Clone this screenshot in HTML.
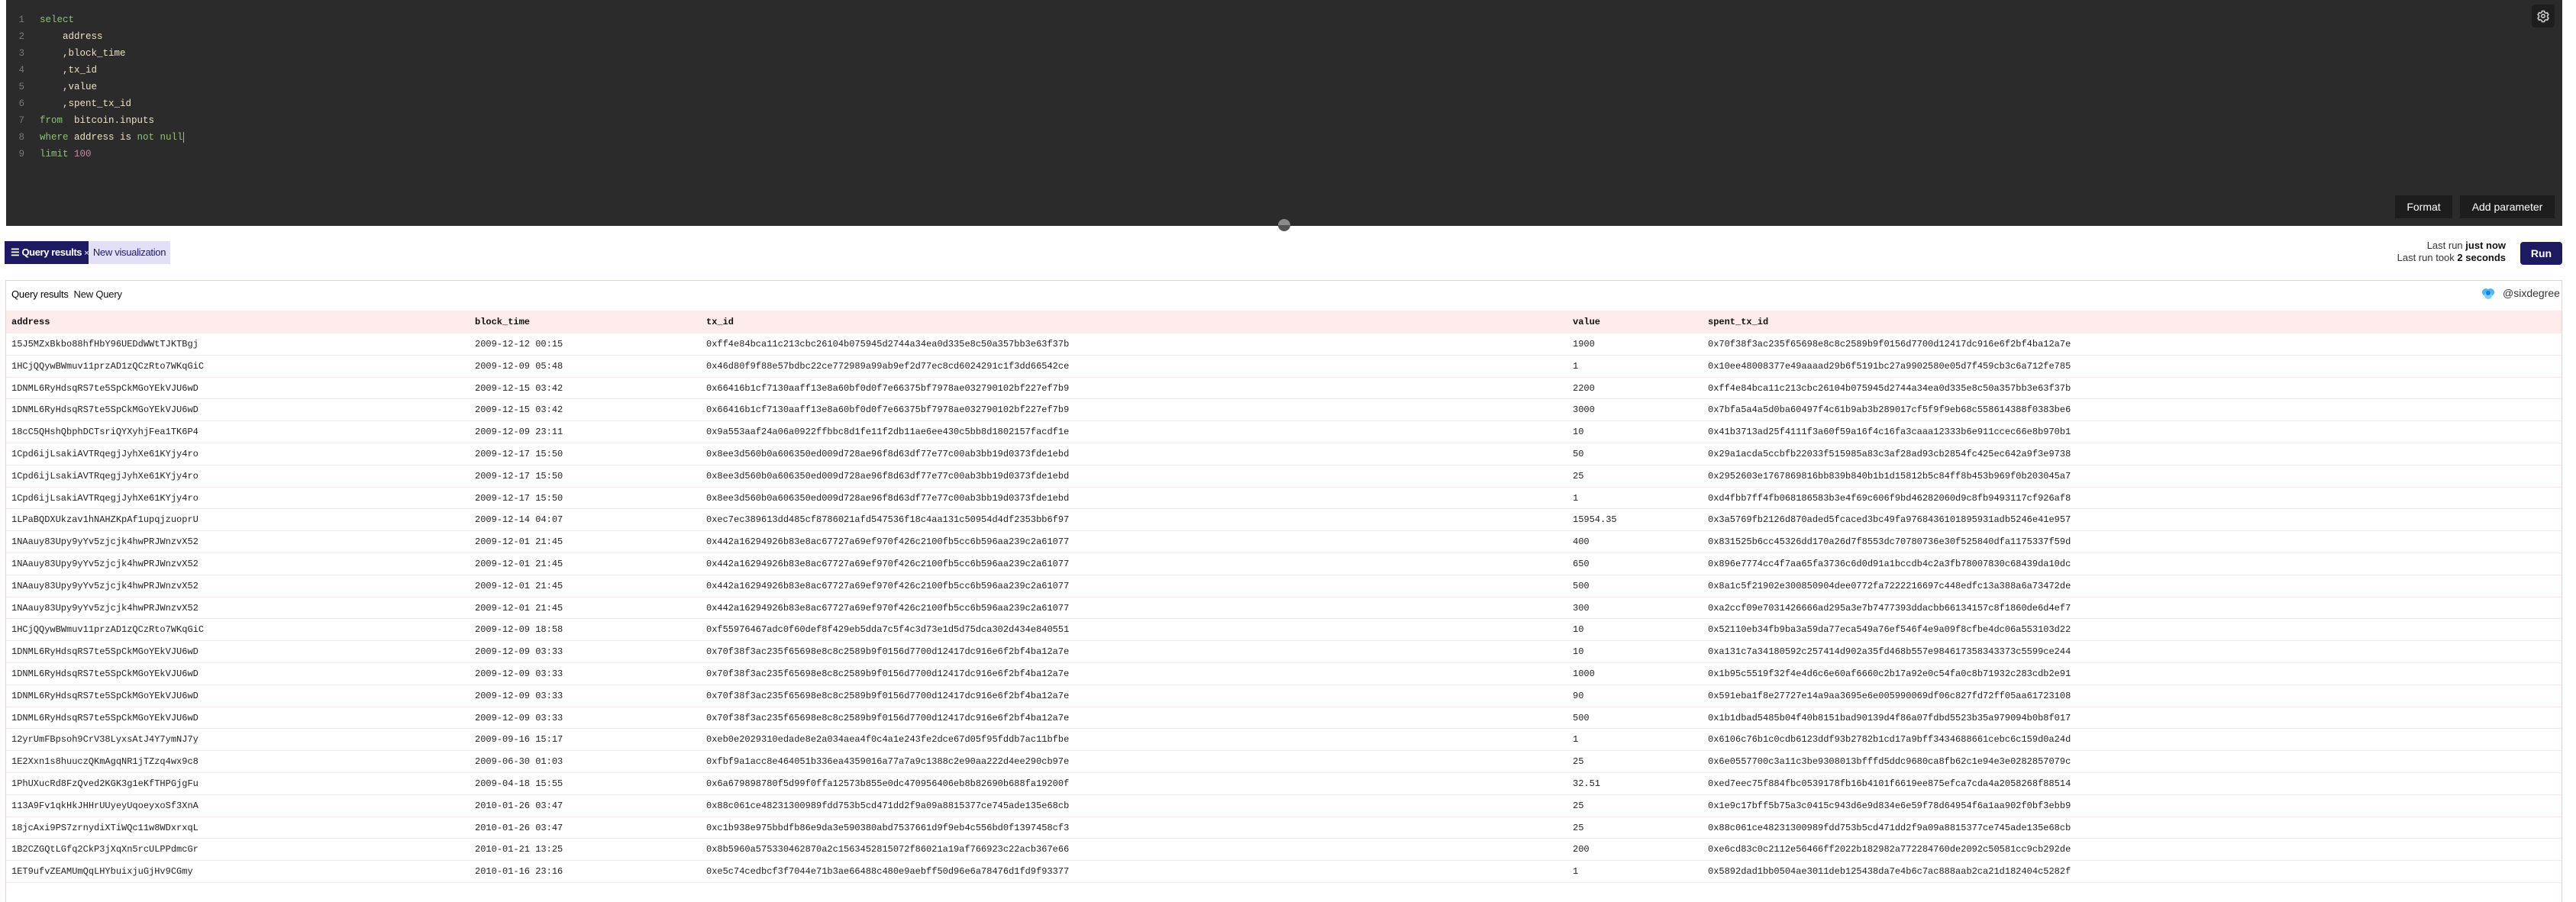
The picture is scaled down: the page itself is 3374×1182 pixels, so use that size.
<!DOCTYPE html>
<html><head><meta charset="utf-8"><style>
*{margin:0;padding:0;box-sizing:border-box}
body{width:3374px;height:1182px;background:#fff;position:relative;overflow:hidden;font-family:"Liberation Sans",sans-serif}
#ed{position:absolute;left:8px;top:0;width:3348px;height:296px;background:#2b2b2b}
.ln{position:absolute;left:14px;width:10px;text-align:right;color:#7a7a7a;font:12.5px "Liberation Mono",monospace}
.cl{position:absolute;left:44px;color:#ede0c4;font:12.5px "Liberation Mono",monospace;white-space:pre}
.k{color:#8fc07a}.n{color:#c98aa9}
.gear{position:absolute;left:3316px;top:6px;width:30px;height:30px;background:#1e1e1e;border-radius:4px}
.btn{position:absolute;top:256px;height:30px;background:#1d1d1d;color:#fff;font:14px "Liberation Sans",sans-serif;line-height:30px;text-align:center}
.handle{position:absolute;left:1674px;top:287px;width:16px;height:16px;border-radius:50%;background:linear-gradient(#8a8a8a 50%,#555 50%)}
.tab1{position:absolute;left:6px;top:316px;width:110px;height:30px;background:#1e1a62;color:#fff;font-size:13px;line-height:30px;padding-left:8px;font-weight:bold;white-space:nowrap;letter-spacing:-0.4px;overflow:hidden}
.tab2{position:absolute;left:116px;top:316px;width:107px;height:30px;background:#e1e0f6;color:#1e1a62;font-size:13px;line-height:30px;text-align:center;white-space:nowrap;letter-spacing:-0.3px}
.lr{position:absolute;right:92px;font:13px "Liberation Sans",sans-serif;color:#333;text-align:right;white-space:nowrap}
.run{position:absolute;left:3301px;top:317px;width:55px;height:30px;background:#1e1a62;color:#fff;border-radius:4px;font:bold 14px "Liberation Sans",sans-serif;line-height:30px;text-align:center}
#panel{position:absolute;left:7px;top:367px;width:3349px;height:815px;border:1px solid #f6c8c8;border-bottom:none}
.ph{position:absolute;left:15px;top:378px;font-size:13px;color:#111;white-space:nowrap;letter-spacing:-0.2px}
.sx{position:absolute;left:3278px;top:376px;font:14px "Liberation Sans",sans-serif;color:#333;white-space:nowrap}
.hr{position:absolute;left:8px;top:407px;width:3347px;height:30px;background:#fdeaea}
.row{position:absolute;left:8px;width:3347px;height:28.8px;border-bottom:1px solid #fbe6e8}
.c{position:absolute;font:12px "Liberation Mono",monospace;color:#222;white-space:pre;top:7px}
.hr .c{font-weight:bold;top:8px;color:#111}
.c1{left:7px}.c2{left:614px}.c3{left:917px}.c4{left:2052px}.c5{left:2229px}
</style></head><body>
<div id="ed">
<div class="ln" style="top:19px">1</div><div class="cl k" style="top:19px">select</div>
<div class="ln" style="top:41px">2</div><div class="cl" style="top:41px">    address</div>
<div class="ln" style="top:63px">3</div><div class="cl" style="top:63px">    ,block_time</div>
<div class="ln" style="top:85px">4</div><div class="cl" style="top:85px">    ,tx_id</div>
<div class="ln" style="top:107px">5</div><div class="cl" style="top:107px">    ,value</div>
<div class="ln" style="top:129px">6</div><div class="cl" style="top:129px">    ,spent_tx_id</div>
<div class="ln" style="top:151px">7</div><div class="cl" style="top:151px"><span class="k">from</span>  bitcoin.inputs</div>
<div class="ln" style="top:173px">8</div><div class="cl" style="top:173px"><span class="k">where</span> address is <span class="k">not null</span><span style="border-left:1px solid #aaa"></span></div>
<div class="ln" style="top:195px">9</div><div class="cl" style="top:195px"><span class="k">limit</span> <span class="n">100</span></div>
</div>
<div class="gear"><svg width="30" height="30" viewBox="0 0 30 30"><g fill="none" stroke="#ccc" stroke-width="1.6"><circle cx="15" cy="15" r="2.2"/><path d="M13.5 8.5h3l.5 1.8 1.6.9 1.8-.5 1.5 2.6-1.3 1.3v1.8l1.3 1.3-1.5 2.6-1.8-.5-1.6.9-.5 1.8h-3l-.5-1.8-1.6-.9-1.8.5-1.5-2.6 1.3-1.3v-1.8l-1.3-1.3 1.5-2.6 1.8.5 1.6-.9z"/></g></svg></div>
<div class="btn" style="left:3137px;width:75px">Format</div>
<div class="btn" style="left:3222px;width:124px">Add parameter</div>
<div class="handle"></div>
<div class="tab1">☰ Query results <span style="font-weight:normal;font-size:11px">×</span></div>
<div class="tab2">New visualization</div>
<div class="lr" style="top:314px">Last run <b style="color:#111">just now</b></div>
<div class="lr" style="top:330px">Last run took <b style="color:#111">2 seconds</b></div>
<div class="run">Run</div>
<div id="panel"></div>
<div class="ph"><b style="font-weight:normal;color:#000">Query results</b> &nbsp;New Query</div>
<svg style="position:absolute;left:3250px;top:377px" width="18" height="16" viewBox="0 0 18 16"><circle cx="6" cy="6" r="5" fill="#4fb4f0"/><circle cx="12" cy="6" r="5" fill="#4fb4f0"/><circle cx="9" cy="10" r="5" fill="#7cd0fa"/><circle cx="9" cy="7" r="3" fill="#1e7fd8"/></svg>
<div class="sx">@sixdegree</div>
<div class="hr"><div class="c c1">address</div><div class="c c2">block_time</div><div class="c c3">tx_id</div><div class="c c4">value</div><div class="c c5">spent_tx_id</div></div>
<div id="rows"></div>
<script>
var d=[
["15J5MZxBkbo88hfHbY96UEDdWWtTJKTBgj","2009-12-12 00:15","0xff4e84bca11c213cbc26104b075945d2744a34ea0d335e8c50a357bb3e63f37b","1900","0x70f38f3ac235f65698e8c8c2589b9f0156d7700d12417dc916e6f2bf4ba12a7e"],
["1HCjQQywBWmuv11przAD1zQCzRto7WKqGiC","2009-12-09 05:48","0x46d80f9f88e57bdbc22ce772989a99ab9ef2d77ec8cd6024291c1f3dd66542ce","1","0x10ee48008377e49aaaad29b6f5191bc27a9902580e05d7f459cb3c6a712fe785"],
["1DNML6RyHdsqRS7te5SpCkMGoYEkVJU6wD","2009-12-15 03:42","0x66416b1cf7130aaff13e8a60bf0d0f7e66375bf7978ae032790102bf227ef7b9","2200","0xff4e84bca11c213cbc26104b075945d2744a34ea0d335e8c50a357bb3e63f37b"],
["1DNML6RyHdsqRS7te5SpCkMGoYEkVJU6wD","2009-12-15 03:42","0x66416b1cf7130aaff13e8a60bf0d0f7e66375bf7978ae032790102bf227ef7b9","3000","0x7bfa5a4a5d0ba60497f4c61b9ab3b289017cf5f9f9eb68c558614388f0383be6"],
["18cC5QHshQbphDCTsriQYXyhjFea1TK6P4","2009-12-09 23:11","0x9a553aaf24a06a0922ffbbc8d1fe11f2db11ae6ee430c5bb8d1802157facdf1e","10","0x41b3713ad25f4111f3a60f59a16f4c16fa3caaa12333b6e911ccec66e8b970b1"],
["1Cpd6ijLsakiAVTRqegjJyhXe61KYjy4ro","2009-12-17 15:50","0x8ee3d560b0a606350ed009d728ae96f8d63df77e77c00ab3bb19d0373fde1ebd","50","0x29a1acda5ccbfb22033f515985a83c3af28ad93cb2854fc425ec642a9f3e9738"],
["1Cpd6ijLsakiAVTRqegjJyhXe61KYjy4ro","2009-12-17 15:50","0x8ee3d560b0a606350ed009d728ae96f8d63df77e77c00ab3bb19d0373fde1ebd","25","0x2952603e1767869816bb839b840b1b1d15812b5c84ff8b453b969f0b203045a7"],
["1Cpd6ijLsakiAVTRqegjJyhXe61KYjy4ro","2009-12-17 15:50","0x8ee3d560b0a606350ed009d728ae96f8d63df77e77c00ab3bb19d0373fde1ebd","1","0xd4fbb7ff4fb068186583b3e4f69c606f9bd46282060d9c8fb9493117cf926af8"],
["1LPaBQDXUkzav1hNAHZKpAf1upqjzuoprU","2009-12-14 04:07","0xec7ec389613dd485cf8786021afd547536f18c4aa131c50954d4df2353bb6f97","15954.35","0x3a5769fb2126d870aded5fcaced3bc49fa9768436101895931adb5246e41e957"],
["1NAauy83Upy9yYv5zjcjk4hwPRJWnzvX52","2009-12-01 21:45","0x442a16294926b83e8ac67727a69ef970f426c2100fb5cc6b596aa239c2a61077","400","0x831525b6cc45326dd170a26d7f8553dc70780736e30f525840dfa1175337f59d"],
["1NAauy83Upy9yYv5zjcjk4hwPRJWnzvX52","2009-12-01 21:45","0x442a16294926b83e8ac67727a69ef970f426c2100fb5cc6b596aa239c2a61077","650","0x896e7774cc4f7aa65fa3736c6d0d91a1bccdb4c2a3fb78007830c68439da10dc"],
["1NAauy83Upy9yYv5zjcjk4hwPRJWnzvX52","2009-12-01 21:45","0x442a16294926b83e8ac67727a69ef970f426c2100fb5cc6b596aa239c2a61077","500","0x8a1c5f21902e300850904dee0772fa7222216697c448edfc13a388a6a73472de"],
["1NAauy83Upy9yYv5zjcjk4hwPRJWnzvX52","2009-12-01 21:45","0x442a16294926b83e8ac67727a69ef970f426c2100fb5cc6b596aa239c2a61077","300","0xa2ccf09e7031426666ad295a3e7b7477393ddacbb66134157c8f1860de6d4ef7"],
["1HCjQQywBWmuv11przAD1zQCzRto7WKqGiC","2009-12-09 18:58","0xf55976467adc0f60def8f429eb5dda7c5f4c3d73e1d5d75dca302d434e840551","10","0x52110eb34fb9ba3a59da77eca549a76ef546f4e9a09f8cfbe4dc06a553103d22"],
["1DNML6RyHdsqRS7te5SpCkMGoYEkVJU6wD","2009-12-09 03:33","0x70f38f3ac235f65698e8c8c2589b9f0156d7700d12417dc916e6f2bf4ba12a7e","10","0xa131c7a34180592c257414d902a35fd468b557e984617358343373c5599ce244"],
["1DNML6RyHdsqRS7te5SpCkMGoYEkVJU6wD","2009-12-09 03:33","0x70f38f3ac235f65698e8c8c2589b9f0156d7700d12417dc916e6f2bf4ba12a7e","1000","0x1b95c5519f32f4e4d6c6e60af6660c2b17a92e0c54fa0c8b71932c283cdb2e91"],
["1DNML6RyHdsqRS7te5SpCkMGoYEkVJU6wD","2009-12-09 03:33","0x70f38f3ac235f65698e8c8c2589b9f0156d7700d12417dc916e6f2bf4ba12a7e","90","0x591eba1f8e27727e14a9aa3695e6e005990069df06c827fd72ff05aa61723108"],
["1DNML6RyHdsqRS7te5SpCkMGoYEkVJU6wD","2009-12-09 03:33","0x70f38f3ac235f65698e8c8c2589b9f0156d7700d12417dc916e6f2bf4ba12a7e","500","0x1b1dbad5485b04f40b8151bad90139d4f86a07fdbd5523b35a979094b0b8f017"],
["12yrUmFBpsoh9CrV38LyxsAtJ4Y7ymNJ7y","2009-09-16 15:17","0xeb0e2029310edade8e2a034aea4f0c4a1e243fe2dce67d05f95fddb7ac11bfbe","1","0x6106c76b1c0cdb6123ddf93b2782b1cd17a9bff3434688661cebc6c159d0a24d"],
["1E2Xxn1s8huuczQKmAgqNR1jTZzq4wx9c8","2009-06-30 01:03","0xfbf9a1acc8e464051b336ea4359016a77a7a9c1388c2e90aa222d4ee290cb97e","25","0x6e0557700c3a11c3be9308013bfffd5ddc9680ca8fb62c1e94e3e0282857079c"],
["1PhUXucRd8FzQved2KGK3g1eKfTHPGjgFu","2009-04-18 15:55","0x6a679898780f5d99f0ffa12573b855e0dc470956406eb8b82690b688fa19200f","32.51","0xed7eec75f884fbc0539178fb16b4101f6619ee875efca7cda4a2058268f88514"],
["113A9Fv1qkHkJHHrUUyeyUqoeyxoSf3XnA","2010-01-26 03:47","0x88c061ce48231300989fdd753b5cd471dd2f9a09a8815377ce745ade135e68cb","25","0x1e9c17bff5b75a3c0415c943d6e9d834e6e59f78d64954f6a1aa902f0bf3ebb9"],
["18jcAxi9PS7zrnydiXTiWQc11w8WDxrxqL","2010-01-26 03:47","0xc1b938e975bbdfb86e9da3e590380abd7537661d9f9eb4c556bd0f1397458cf3","25","0x88c061ce48231300989fdd753b5cd471dd2f9a09a8815377ce745ade135e68cb"],
["1B2CZGQtLGfq2CkP3jXqXn5rcULPPdmcGr","2010-01-21 13:25","0x8b5960a575330462870a2c1563452815072f86021a19af766923c22acb367e66","200","0xe6cd83c0c2112e56466ff2022b182982a772284760de2092c50581cc9cb292de"],
["1ET9ufvZEAMUmQqLHYbuixjuGjHv9CGmy","2010-01-16 23:16","0xe5c74cedbcf3f7044e71b3ae66488c480e9aebff50d96e6a78476d1fd9f93377","1","0x5892dad1bb0504ae3011deb125438da7e4b6c7ac888aab2ca21d182404c5282f"]];
var h="";for(var i=0;i<d.length;i++){var r=d[i];h+='<div class="row" style="top:'+(437+i*28.8)+'px">';for(var j=0;j<5;j++)h+='<div class="c c'+(j+1)+'">'+r[j]+'</div>';h+='</div>';}
document.getElementById("rows").innerHTML=h;
</script>
</body></html>
